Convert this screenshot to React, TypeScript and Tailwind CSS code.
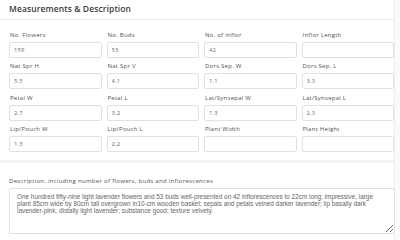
const fields: { label: string; value: string }[] = [
  { label: "No. Flowers", value: "159" },
  { label: "No. Buds", value: "53" },
  { label: "No. of Inflor", value: "42" },
  { label: "Inflor Length", value: "" },
  { label: "Nat Spr H", value: "5.5" },
  { label: "Nat Spr V", value: "4.1" },
  { label: "Dors Sep. W", value: "1.1" },
  { label: "Dors Sep. L", value: "3.3" },
  { label: "Petal W", value: "2.7" },
  { label: "Petal L", value: "3.2" },
  { label: "Lat/Synsepal W", value: "1.3" },
  { label: "Lat/Synsepal L", value: "2.3" },
  { label: "Lip/Pouch W", value: "1.3" },
  { label: "Lip/Pouch L", value: "2.2" },
  { label: "Plant Width", value: "" },
  { label: "Plant Height", value: "" },
];

const description =
  "One hundred fifty-nine light lavender flowers and 53 buds well-presented on 42 inflorescences to 22cm long; impressive, large plant 85cm wide by 80cm tall overgrown in10-cm wooden basket; sepals and petals veined darker lavender; lip basally dark lavender-pink, distally light lavender; substance good; texture velvety.";

export default function App() {
  return (
    <div className="w-[400px] h-[240px] overflow-hidden bg-[#fbfbfc] font-['Open_Sans',sans-serif]">
      <div className="w-[395px] h-full bg-white border-r border-[#ececf0] flex flex-col">
        <div className="h-[21px] flex items-center pl-[9px] border-b border-[#ececf0]">
          <h2 className="text-[8.5px] font-semibold text-[#3a3a3a] tracking-[0.1px]">
            Measurements &amp; Description
          </h2>
        </div>

        <div className="grid grid-cols-4 gap-x-[5px] gap-y-[4.5px] pl-[9px] pt-[11px] pb-[8px] border-b-[3px] border-[#f4f4f6]">
          {fields.map((f) => (
            <div key={f.label} className="flex flex-col">
              <label className="h-[8px] leading-[8px] text-[6px] tracking-[0.25px] text-[#505050] pl-[1px] mb-[3px]">
                {f.label}
              </label>
              <input
                readOnly
                value={f.value}
                className="h-[16px] w-full border border-[#e1e1e4] rounded-[2px] px-[4px] text-[5.8px] tracking-[0.2px] text-[#6a6a6a] bg-white outline-none"
              />
            </div>
          ))}
        </div>

        <div className="pl-[9px] pt-[14px]">
          <label className="block h-[8px] leading-[8px] text-[6px] tracking-[0.3px] text-[#505050] mb-[3px]">
            Description, including number of flowers, buds and inflorescences
          </label>
          <textarea
            readOnly
            value={description}
            className="w-[386px] h-[46px] border border-[#e1e1e4] rounded-[2px] px-[7px] py-[4px] text-[6.4px] leading-[7px] text-[#666] bg-white outline-none resize-y font-['Liberation_Sans',sans-serif]"
          />
        </div>
      </div>
    </div>
  );
}
